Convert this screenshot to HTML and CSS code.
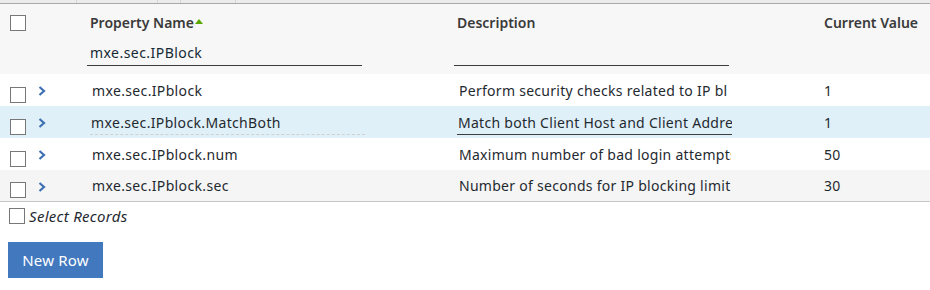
FILE: index.html
```html
<!DOCTYPE html>
<html lang="en">
<head>
    <meta charset="UTF-8">
    <title>System Properties</title>
    <link rel="stylesheet" href="styles.css">
</head>
<body>
    <div class="table">
        <div class="top-strip">
            <span class="strip-cell s1"></span>
            <span class="strip-cell s2"></span>
            <span class="strip-cell s3"></span>
            <span class="strip-cell s4"></span>
            <span class="strip-cell s5"></span>
        </div>
        <div class="table-head">
            <div class="row head-row">
                <div class="cell check-cell"><span class="checkbox"></span></div>
                <div class="cell toggle-cell"></div>
                <div class="cell name-cell">Property Name<span class="sort-up"></span></div>
                <div class="cell desc-cell">Description</div>
                <div class="cell value-cell">Current Value</div>
            </div>
            <div class="row filter-row">
                <div class="cell check-cell"></div>
                <div class="cell toggle-cell"></div>
                <div class="cell name-cell"><span class="filter">mxe.sec.IPBlock</span></div>
                <div class="cell desc-cell"><span class="filter"></span></div>
                <div class="cell value-cell"></div>
            </div>
        </div>

        <div class="row body-row">
            <div class="cell check-cell"><span class="checkbox"></span></div>
            <div class="cell toggle-cell"><svg class="chevron" viewBox="0 0 8 10"><path d="M1.5 1 L6 5 L1.5 9" /></svg></div>
            <div class="cell name-cell">mxe.sec.IPblock</div>
            <div class="cell desc-cell"><span class="clip">Perform security checks related to IP bl</span></div>
            <div class="cell value-cell">1</div>
        </div>
        <div class="row body-row selected">
            <div class="cell check-cell"><span class="checkbox"></span></div>
            <div class="cell toggle-cell"><svg class="chevron" viewBox="0 0 8 10"><path d="M1.5 1 L6 5 L1.5 9" /></svg></div>
            <div class="cell name-cell"><span class="edit readonly">mxe.sec.IPblock.MatchBoth</span></div>
            <div class="cell desc-cell"><span class="edit clip">Match both Client Host and Client Addre</span></div>
            <div class="cell value-cell">1</div>
        </div>
        <div class="row body-row">
            <div class="cell check-cell"><span class="checkbox"></span></div>
            <div class="cell toggle-cell"><svg class="chevron" viewBox="0 0 8 10"><path d="M1.5 1 L6 5 L1.5 9" /></svg></div>
            <div class="cell name-cell">mxe.sec.IPblock.num</div>
            <div class="cell desc-cell"><span class="clip">Maximum number of bad login attempts</span></div>
            <div class="cell value-cell">50</div>
        </div>
        <div class="row body-row striped">
            <div class="cell check-cell"><span class="checkbox"></span></div>
            <div class="cell toggle-cell"><svg class="chevron" viewBox="0 0 8 10"><path d="M1.5 1 L6 5 L1.5 9" /></svg></div>
            <div class="cell name-cell">mxe.sec.IPblock.sec</div>
            <div class="cell desc-cell"><span class="clip">Number of seconds for IP blocking limit</span></div>
            <div class="cell value-cell">30</div>
        </div>
    </div>

    <div class="select-records">
        <span class="checkbox"></span>
        <span class="select-label">Select Records</span>
    </div>

    <button class="new-row">New Row</button>
</body>
</html>
```

FILE: styles.css
```css
body {
    margin: 0;
    background-color: #ffffff;
    font-family: 'Noto Sans', sans-serif;
    font-size: 14px;
    color: #1f2a30;
}

.top-strip {
    display: flex;
    height: 3px;
    background-color: #ececec;
    border-bottom: 1px solid #a8a8a8;
}

.strip-cell {
    border-right: 1px solid #d6d6d6;
}

.s1 { width: 76px; }
.s2 { width: 80px; }
.s3 { width: 22px; }
.s4 { width: 54px; }
.s5 { flex: 1; border-right: none; }

.table-head {
    background-color: #f7f7f7;
    height: 70px;
}

.row {
    display: grid;
    grid-template-columns: 35px 52px 367px 366px 1fr;
}

.cell {
    display: flex;
    align-items: center;
    white-space: nowrap;
}

.check-cell {
    padding-left: 10px;
}

.head-row {
    height: 38px;
    font-weight: 600;
    color: #3a3a3a;
}

.head-row .cell {
    align-items: flex-start;
    padding-top: 9px;
    box-sizing: border-box;
}

.head-row .name-cell,
.head-row .desc-cell {
    padding-left: 3px;
}

.head-row .value-cell {
    padding-left: 4px;
}

.head-row .check-cell {
    padding-top: 11px;
}

.sort-up {
    width: 0;
    height: 0;
    border-left: 4px solid transparent;
    border-right: 4px solid transparent;
    border-bottom: 5px solid #5aa700;
    margin-left: 1px;
    margin-top: 6px;
}

.filter-row {
    height: 32px;
}

.filter-row .cell {
    align-items: flex-start;
}

.filter {
    display: block;
    width: 275px;
    height: 24px;
    line-height: 22px;
    padding-left: 3px;
    box-sizing: border-box;
    border-bottom: 1px solid #3d3d3d;
    color: #152935;
    letter-spacing: 0.45px;
}

.body-row {
    height: 32px;
    background-color: #ffffff;
    letter-spacing: 0.35px;
}

.body-row.selected {
    background-color: #dff0f8;
}

.body-row.striped {
    background-color: #f5f5f5;
    height: 31px;
    border-bottom: 1px solid #c8c8c8;
}

.body-row .name-cell,
.body-row .desc-cell {
    padding-left: 5px;
}

.body-row .desc-cell {
    letter-spacing: 0.28px;
}

.body-row .value-cell {
    padding-left: 4px;
}

.body-row .check-cell .checkbox {
    margin-top: 9px;
}

.checkbox {
    display: inline-block;
    width: 14px;
    height: 14px;
    border: 1px solid #777777;
    background-color: #ffffff;
}

.chevron {
    width: 8px;
    height: 10px;
    margin-left: 3px;
    margin-top: 2px;
    fill: none;
    stroke: #3d70b2;
    stroke-width: 2.2;
}

.clip {
    display: block;
    width: 272px;
    overflow: hidden;
}

.edit {
    display: block;
    width: 275px;
    margin-left: -2px;
    padding-left: 1px;
    padding-bottom: 2px;
    margin-top: 4px;
    box-sizing: border-box;
    border-bottom: 1px solid #3d3d3d;
}

.edit.readonly {
    border-bottom: 1px dashed #d0d0d0;
}

.select-records {
    display: flex;
    align-items: center;
    height: 28px;
    padding-left: 9px;
}

.select-label {
    font-size: 15px;
    font-style: italic;
    letter-spacing: 0.3px;
    margin-left: 4px;
    color: #1f2a30;
}

.new-row {
    margin: 12px 0 0 8px;
    width: 95px;
    height: 36px;
    border: none;
    background-color: #4178be;
    color: #ffffff;
    font-family: 'Noto Sans', sans-serif;
    font-size: 15px;
    letter-spacing: 0.2px;
    cursor: pointer;
}

.new-row:hover {
    background-color: #3b6db0;
}
```
